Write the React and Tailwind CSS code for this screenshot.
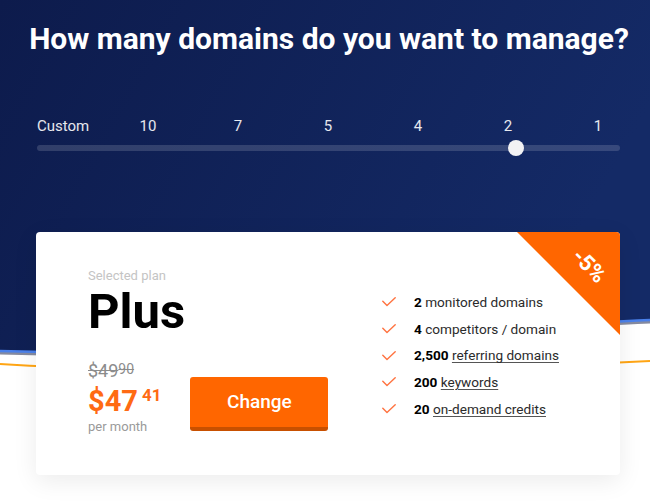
import { useState } from 'react'

const STEPS = ['10', '7', '5', '4', '2', '1']

const FEATURES = [
  { n: '2', text: 'monitored domains' },
  { n: '4', text: 'competitors / domain' },
  { n: '2,500', text: 'referring domains', link: true },
  { n: '200', text: 'keywords', link: true },
  { n: '20', text: 'on-demand credits', link: true },
]

function Check() {
  return (
    <svg width="14" height="10" viewBox="0 0 14 10" fill="none" className="shrink-0">
      <polyline points="0.8,4.2 5,8.6 13.2,0.8" stroke="#ff7340" strokeWidth="1.4" strokeLinecap="round" strokeLinejoin="round" />
    </svg>
  )
}

function Backdrop() {
  return (
    <svg className="absolute inset-0" width="650" height="504" viewBox="0 0 650 504" preserveAspectRatio="none">
      <defs>
        <linearGradient id="navy" x1="0" y1="0" x2="1" y2="0.3">
          <stop offset="0" stopColor="#0d1b4c" />
          <stop offset="1" stopColor="#142a66" />
        </linearGradient>
      </defs>
      <path d="M0 0 H650 V320 C 480 326 260 360 0 351 Z" fill="url(#navy)" />
      <path d="M0 351 C 260 360 480 326 650 320" stroke="#0b1640" strokeWidth="3" fill="none" transform="translate(0 2)" opacity="0.5" />
      <path d="M0 351 C 260 360 480 326 650 320" stroke="#4a80ea" strokeWidth="2.5" fill="none" />
      <path d="M0 364 C 200 376 430 372 650 361" stroke="#ffa514" strokeWidth="2" fill="none" />
    </svg>
  )
}

export default function App() {
  const [step, setStep] = useState(4)

  return (
    <div className="relative w-[650px] h-[504px] overflow-hidden bg-white font-['Roboto',sans-serif]">
      <Backdrop />

      <div className="relative">
        <h1 className="pt-[21px] pl-[8px] text-center text-[30px] leading-[35px] font-bold whitespace-nowrap text-white">
          How many domains do you want to manage?
        </h1>

        {/* slider */}
        <div className="mt-[61px] px-[37px]">
          <div className="flex text-[15px] leading-[18px] text-white/90">
            <span className="w-[66px] shrink-0">Custom</span>
            {STEPS.map((s, i) => (
              <button key={s} onClick={() => setStep(i)} className="w-[90px] shrink-0 text-center">{s}</button>
            ))}
          </div>
          <div className="relative mt-[10px] h-[6px] w-[583px] rounded-full bg-white/15">
            <div className="absolute top-[-5px] left-[471px] h-[16px] w-[16px] rounded-full bg-[#f2f2f4]" />
          </div>
        </div>

        {/* plan card */}
        <div className="relative mt-[81px] ml-[36px] flex h-[243px] w-[584px] overflow-hidden rounded-[4px] bg-white shadow-[0_6px_24px_rgba(0,0,0,0.08)]">
          <div className="w-[346px] shrink-0 pt-[36px] pl-[52px]">
            <div className="text-[13px] leading-[16px] text-[#c4c4c4]">Selected plan</div>
            <div className="mt-[3px] text-[49px] leading-[50px] font-bold text-black">Plus</div>

            <div className="mt-[24px] flex items-start">
              <div>
                <div className="flex items-start text-[#8c8c8c] line-through decoration-[#8c8c8c]">
                  <span className="text-[18px] leading-[20px]">$49</span>
                  <span className="text-[14px] leading-[16px]">90</span>
                </div>
                <div className="mt-[4px] flex items-start text-[#ff6a13] font-bold">
                  <span className="text-[29px] leading-[32px]">$47</span>
                  <span className="ml-[4px] text-[17px] leading-[20px]">41</span>
                </div>
                <div className="mt-[2px] text-[13px] leading-[16px] text-[#9a9a9a]">per month</div>
              </div>
              <button className="mt-[16px] ml-[29px] flex h-[54px] w-[138px] items-center justify-center rounded-[3px] border-b-[4px] border-[#c85000] bg-[#ff6600] text-[19px] font-medium text-white">
                Change
              </button>
            </div>
          </div>

          <ul className="pt-[57px] text-[13.6px] leading-[26.67px] text-[#2b2b2b]">
            {FEATURES.map(f => (
              <li key={f.text} className="flex items-center gap-[18px]">
                <Check />
                <span>
                  <b className="font-bold text-black">{f.n}</b>{' '}
                  <span className={f.link ? 'underline underline-offset-2 decoration-[#555]' : ''}>{f.text}</span>
                </span>
              </li>
            ))}
          </ul>

          {/* discount corner */}
          <div className="absolute top-0 right-0 h-[103px] w-[103px] bg-[#ff6600] [clip-path:polygon(0_0,100%_0,100%_100%)]">
            <span className="absolute top-[34px] left-[72px] -translate-x-1/2 -translate-y-1/2 rotate-45 text-[22px] leading-none font-bold text-white">
              -5%
            </span>
          </div>
        </div>
      </div>
    </div>
  )
}
